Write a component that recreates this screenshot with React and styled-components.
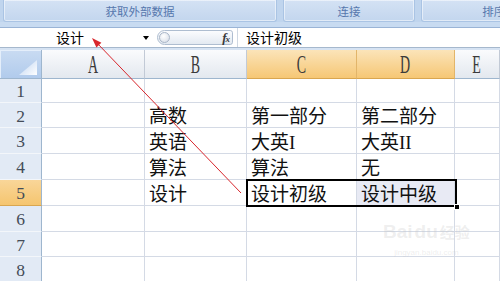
import React from 'react';
import styled, { createGlobalStyle } from 'styled-components';

const Global = createGlobalStyle`
  html, body { margin: 0; padding: 0; width: 500px; height: 281px; overflow: hidden; background: #fff; }
  #root { width: 500px; height: 281px; }
`;

const COLS = [42, 103, 102, 110, 98, 45];
const ROWS = [29, 24, 25, 26, 26, 26, 26, 25, 25];
const LETTERS = ['A', 'B', 'C', 'D', 'E'];
const DATA = [
  ['', '', '', '', ''],
  ['', '高数', '第一部分', '第二部分', ''],
  ['', '英语', '大英I', '大英II', ''],
  ['', '算法', '算法', '无', ''],
  ['', '设计', '设计初级', '设计中级', ''],
  ['', '', '', '', ''],
  ['', '', '', '', ''],
  ['', '', '', '', ''],
];
const SEL_COLS = [2, 3];
const SEL_ROW = 4;

const Page = styled.div`
  position: relative;
  width: 500px;
  height: 281px;
  overflow: hidden;
  display: flex;
  flex-direction: column;
  font-family: "Noto Sans CJK SC", sans-serif;
`;

const Ribbon = styled.div`
  height: 22px;
  flex-shrink: 0;
  display: flex;
  gap: 6px;
  padding-left: 3px;
  background: #c0d5ee;
  overflow: hidden;
`;

const Group = styled.div`
  width: ${p => p.$w}px;
  flex-shrink: 0;
  box-sizing: border-box;
  display: flex;
  align-items: center;
  justify-content: center;
  background: linear-gradient(#d4e2f4, #c3d6ee);
  border: 1px solid #aac4e4;
  border-top: none;
  border-radius: 0 0 3px 3px;
  box-shadow: inset 0 0 0 1px rgba(255, 255, 255, 0.5);
  color: #5677ad;
  font-size: 11.5px;
  white-space: nowrap;
`;

const Strip = styled.div`
  height: 6px;
  flex-shrink: 0;
  background: #c8dbf1;
  border-bottom: 1px solid #9ab4d6;
  box-sizing: border-box;
`;

const FormulaBar = styled.div`
  height: 20px;
  flex-shrink: 0;
  display: flex;
  align-items: center;
  background: #fff;
  border-bottom: 1px solid #a6b8cd;
  box-sizing: border-box;
`;

const NameBox = styled.div`
  width: 140px;
  text-align: center;
  font-size: 14px;
  line-height: 19px;
  color: #000;
`;

const DropArrow = styled.div`
  width: 17px;
  height: 19px;
  display: flex;
  align-items: center;
  justify-content: center;
  &::after {
    content: '';
    border-left: 3.5px solid transparent;
    border-right: 3.5px solid transparent;
    border-top: 4px solid #000;
    margin-right: 6px;
  }
`;

const Pill = styled.div`
  width: 76px;
  height: 15px;
  box-sizing: border-box;
  display: flex;
  align-items: center;
  justify-content: space-between;
  padding: 0 3px 0 1px;
  border: 1px solid #aebdd0;
  border-radius: 8px 3px 3px 8px;
  background: linear-gradient(#fbfcfe, #e3e9f1);
`;

const Knob = styled.div`
  width: 11px;
  height: 11px;
  border-radius: 50%;
  border: 1px solid #a9b6c8;
  background: radial-gradient(circle at 40% 35%, #ffffff, #d3dae5);
  box-sizing: border-box;
`;

const Fx = styled.span`
  font-family: "Liberation Serif", serif;
  font-style: italic;
  font-weight: bold;
  font-size: 13px;
  color: #3a3a3a;
  letter-spacing: -1px;
  small { font-size: 9px; }
`;

const FormulaText = styled.div`
  flex: 1;
  height: 19px;
  margin-left: 4px;
  padding-left: 8px;
  border-left: 1px solid #cfd8e3;
  font-size: 14px;
  line-height: 19px;
  color: #000;
`;

const Gap = styled.div`
  height: 2px;
  flex-shrink: 0;
  background: #d6e3f3;
`;

const Sheet = styled.div`
  position: relative;
  flex: 1;
  display: grid;
  grid-template-columns: ${COLS.map(c => c + 'px').join(' ')};
  grid-template-rows: ${ROWS.map(r => r + 'px').join(' ')};
  overflow: hidden;
`;

const Corner = styled.div`
  position: relative;
  box-sizing: border-box;
  background: linear-gradient(#c9dbf2, #b1cbec);
  border-right: 1px solid #9eb6ce;
  border-bottom: 1px solid #9eb6ce;
  box-shadow: inset 1px 1px 0 #e4eefa;
  &::after {
    content: '';
    position: absolute;
    right: 4px;
    bottom: 3px;
    width: 18px;
    height: 15px;
    clip-path: polygon(100% 0, 100% 100%, 0 100%);
    background: linear-gradient(135deg, #d6e4f6 40%, #ffffff 100%);
  }
`;

const ColHeader = styled.div`
  box-sizing: border-box;
  display: flex;
  align-items: center;
  justify-content: center;
  overflow: hidden;
  background: ${p => p.$sel
    ? 'linear-gradient(#fbe4b9, #f6c775)'
    : 'linear-gradient(#fafbfd, #e3e8ef)'};
  border-right: 1px solid ${p => p.$sel ? '#e2b56a' : '#c2cad6'};
  border-bottom: 1px solid ${p => p.$sel ? '#d9a650' : '#9eb6ce'};
`;

const Letter = styled.span`
  display: inline-block;
  font-family: "Liberation Serif", serif;
  font-size: 25px;
  line-height: 25px;
  color: #3a3a3a;
  transform: scaleX(0.56);
`;

const RowHeader = styled.div`
  box-sizing: border-box;
  display: flex;
  align-items: center;
  justify-content: center;
  padding-top: 2px;
  background: ${p => p.$sel
    ? 'linear-gradient(#f9d699, #f5c56f)'
    : '#e2eaf5'};
  border-right: 1px solid #9eb6ce;
  border-bottom: 1px solid ${p => p.$sel ? '#d9a650' : '#f3f6fa'};
  font-family: "Liberation Serif", serif;
  font-size: 17.5px;
  color: #444c58;
`;

const Cell = styled.div`
  box-sizing: border-box;
  display: flex;
  align-items: flex-end;
  padding: 0 0 0 4px;
  background: ${p => p.$fill ? '#e8eaf4' : '#fff'};
  border-right: 1px solid #d4dae5;
  border-bottom: 1px solid #d4dae5;
  font-family: "Liberation Serif", "Noto Sans CJK SC", serif;
  font-size: 19px;
  line-height: 21px;
  color: #111;
  white-space: nowrap;
  overflow: hidden;
`;

const Selection = styled.div`
  position: absolute;
  box-sizing: border-box;
  border: 2px solid #000;
  pointer-events: none;
  &::after {
    content: '';
    position: absolute;
    right: -5px;
    bottom: -5px;
    width: 6px;
    height: 6px;
    background: #000;
    border: 1px solid #fff;
    box-sizing: border-box;
  }
`;

const Watermark = styled.div`
  position: absolute;
  left: 383px;
  top: 222px;
  display: flex;
  flex-direction: column;
  align-items: center;
  color: rgba(200, 200, 200, 0.3);
  pointer-events: none;
`;

const WmMain = styled.div`
  display: flex;
  align-items: flex-end;
  gap: 2px;
  font-family: "Liberation Sans", sans-serif;
  font-weight: bold;
  font-size: 19px;
  line-height: 20px;
  span.cn { font-family: "Noto Sans CJK SC", sans-serif; font-size: 15px; }
`;

const WmSub = styled.div`
  font-family: "Liberation Sans", sans-serif;
  font-size: 8px;
  margin-top: 6px;
`;

const Overlay = styled.svg`
  position: absolute;
  left: 0;
  top: 0;
  pointer-events: none;
`;

export default function App() {
  const selLeft = COLS.slice(0, 3).reduce((a, b) => a + b, 0) - 1;
  const selTop = ROWS.slice(0, SEL_ROW + 1).reduce((a, b) => a + b, 0) - 1;
  const selWidth = COLS[3] + COLS[4] + 3;
  const selHeight = ROWS[SEL_ROW + 1] + 2;

  return (
    <>
      <Global />
      <Page>
        <Ribbon>
          <Group $w={274}>获取外部数据</Group>
          <Group $w={132}>连接</Group>
          <Group $w={180}>排序和筛选</Group>
        </Ribbon>
        <Strip />
        <FormulaBar>
          <NameBox>设计</NameBox>
          <DropArrow />
          <Pill>
            <Knob />
            <Fx>f<small>x</small></Fx>
          </Pill>
          <FormulaText>设计初级</FormulaText>
        </FormulaBar>
        <Gap />
        <Sheet>
          <Corner />
          {LETTERS.map((l, i) => (
            <ColHeader key={l} $sel={SEL_COLS.includes(i)}>
              <Letter>{l}</Letter>
            </ColHeader>
          ))}
          {DATA.map((row, r) => (
            <React.Fragment key={r}>
              <RowHeader $sel={r === SEL_ROW}>{r + 1}</RowHeader>
              {row.map((v, c) => (
                <Cell key={c} $fill={r === SEL_ROW && c === 3}>{v}</Cell>
              ))}
            </React.Fragment>
          ))}
          <Selection style={{ left: selLeft, top: selTop, width: selWidth, height: selHeight }} />
        </Sheet>
        <Watermark>
          <WmMain>
            <span>Bai</span>
            <span>du</span>
            <span className="cn">经验</span>
          </WmMain>
          <WmSub>jingyan.baidu.com</WmSub>
        </Watermark>
        <Overlay width="500" height="281" viewBox="0 0 500 281">
          <line x1="241" y1="193" x2="97" y2="43" stroke="#d8262c" strokeWidth="1" />
          <polygon points="92,38 101.4,42.8 96.4,47.6" fill="#d8262c" />
        </Overlay>
      </Page>
    </>
  );
}
